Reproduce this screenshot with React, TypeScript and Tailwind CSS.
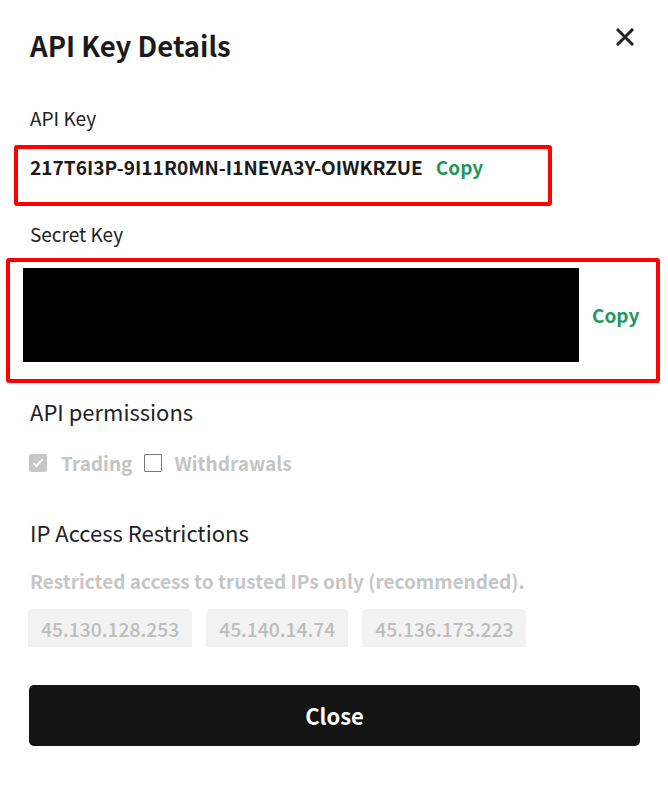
import React from "react";

const font = { fontFamily: '"Noto Sans CJK KR", "Noto Sans", sans-serif' };

export default function App() {
  return (
    <div className="w-[668px] h-[793px] bg-white text-[#1b1b1b] overflow-hidden" style={font}>
      <div className="flex items-start justify-between pl-[30px] pr-[34px] pt-[26px]">
        <h1 className="text-[27.5px] font-bold leading-[38px] text-[#1b1b1b]">API Key Details</h1>
        <button className="mt-[2px] text-[#222]" aria-label="close">
          <svg width="18" height="18" viewBox="0 0 18 18" fill="none" stroke="#222" strokeWidth="3" strokeLinecap="square">
            <path d="M2 2L16 16M16 2L2 16" />
          </svg>
        </button>
      </div>

      <div className="pl-[30px] mt-[41px] text-[19px] leading-[26px] text-[#222]">API Key</div>

      <div className="ml-[14px] mt-[14px] w-[538px] h-[61px] border-4 border-[#ff0000] rounded-[3px] pl-[12px] pt-[5px] flex items-start gap-[13px]">
        <span className="text-[19.1px] font-bold leading-[26px] text-[#1b1b1b]">217T6I3P-9I11R0MN-I1NEVA3Y-OIWKRZUE</span>
        <span className="text-[19px] font-bold leading-[26px] text-[#23965f]">Copy</span>
      </div>

      <div className="pl-[30px] mt-[15px] text-[19px] leading-[26px] text-[#222]">Secret Key</div>

      <div className="ml-[6px] mt-[11px] w-[654px] h-[125px] border-4 border-[#ff0000] rounded-[3px] pt-[6px] pl-[13px]">
        <div className="flex items-center h-[94px]">
          <div className="w-[556px] h-[94px] bg-black" />
          <span className="ml-[13px] text-[19px] font-bold leading-[26px] text-[#23965f]">Copy</span>
        </div>
      </div>

      <div className="pl-[30px] mt-[13px] text-[22px] leading-[30px] text-[#222]">API permissions</div>

      <div className="pl-[29px] mt-[24px] flex items-center h-[26px]">
        <span className="w-[18px] h-[18px] bg-[#c7c7c7] rounded-[2px] flex items-center justify-center">
          <svg width="12" height="10" viewBox="0 0 12 10" fill="none" stroke="white" strokeWidth="2">
            <path d="M1.5 5L4.5 8L10.5 1.5" />
          </svg>
        </span>
        <span className="ml-[14px] text-[19px] font-bold leading-[26px] text-[#c4c4c4]">Trading</span>
        <span className="ml-[12px] w-[18px] h-[18px] border border-[#7a7a7a] rounded-[1px]" />
        <span className="ml-[12px] text-[19px] font-bold leading-[26px] text-[#c4c4c4]">Withdrawals</span>
      </div>

      <div className="pl-[30px] mt-[41px] text-[22px] leading-[30px] text-[#222]">IP Access Restrictions</div>

      <div className="pl-[30px] mt-[21px] text-[19px] font-bold leading-[26px] text-[#c6c6c6]">
        Restricted access to trusted IPs only (recommended).
      </div>

      <div className="pl-[28px] mt-[15px] flex gap-[14px]">
        {["45.130.128.253", "45.140.14.74", "45.136.173.223"].map((ip) => (
          <div key={ip} className="h-[38px] px-[13px] pt-[7px] bg-[#f2f2f2] rounded-t-[5px] text-[19.3px] font-medium leading-[26px] text-[#bdbdbd]">
            {ip}
          </div>
        ))}
      </div>

      <div className="pl-[29px] pr-[28px] mt-[38px]">
        <button className="w-full h-[61px] bg-[#141414] rounded-[5px] text-white text-[22px] font-bold">Close</button>
      </div>
    </div>
  );
}
